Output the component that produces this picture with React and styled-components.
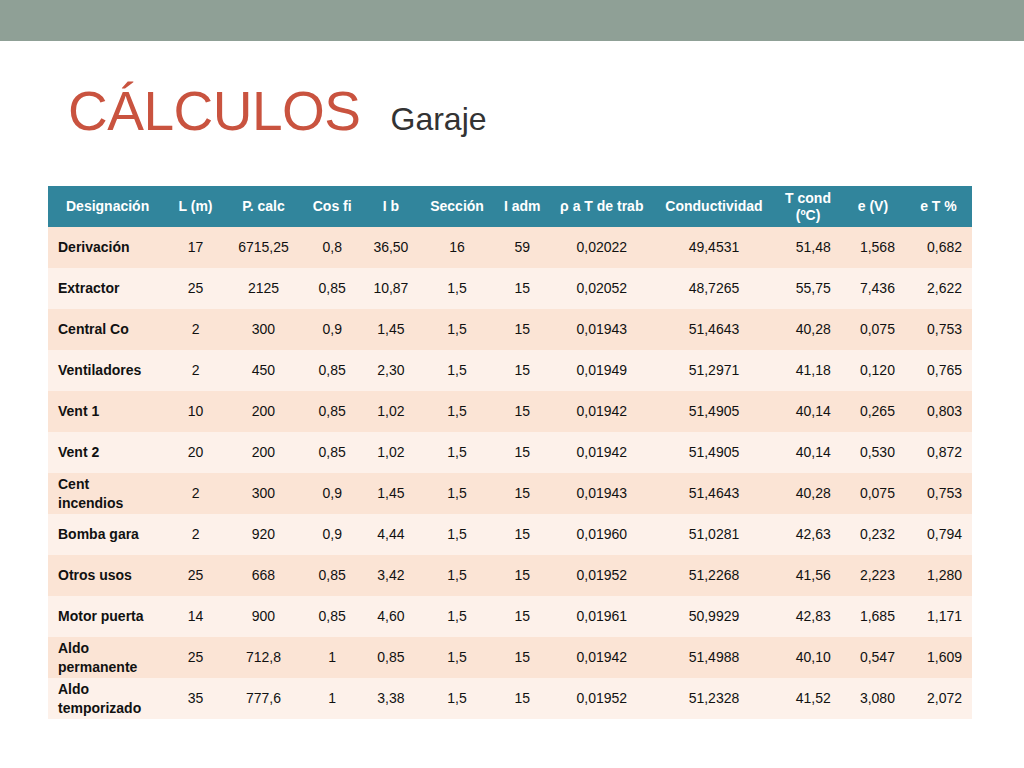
import React from "react";
import styled, { createGlobalStyle } from "styled-components";

const GlobalStyle = createGlobalStyle`
  body { margin: 0; background: #ffffff; font-family: "Liberation Sans", Arial, sans-serif; }
`;

const TopBar = styled.div`
  height: 41px;
  background: #8fa096;
`;

const Slide = styled.div`
  width: 1024px;
  height: 768px;
  background: #fff;
  overflow: hidden;
`;

const TitleRow = styled.div`
  display: flex;
  align-items: baseline;
  gap: 30px;
  padding: 38px 0 0 68px;
  height: 107px;
  box-sizing: border-box;
`;

const Title = styled.h1`
  margin: 0;
  font-weight: 400;
  font-size: 55px;
  color: #c9533f;
  letter-spacing: -0.5px;
`;

const Subtitle = styled.span`
  font-size: 32px;
  color: #333;
`;

const Table = styled.table`
  margin: 38px 0 0 48px;
  width: 924px;
  border-collapse: collapse;
  font-size: 14px;
  color: #111;
`;

const Th = styled.th`
  background: #31859c;
  color: #fff;
  font-weight: 700;
  height: 41px;
  padding: 0 4px;
  line-height: 17px;
  width: ${p => p.$w}px;
  text-align: center;
`;

const Tr = styled.tr`
  background: ${p => (p.$odd ? "#fbe4d5" : "#fdf1ea")};
  height: 41px;
`;

const Td = styled.td`
  padding: 0 ${p => (p.$right ? "10px" : "4px")};
  text-align: ${p => (p.$right ? "right" : "center")};
  line-height: 17px;
`;

const NameTd = styled.td`
  padding: 0 10px;
  font-weight: 700;
  line-height: 19px;
`;

const cols = [
  ["Designación", 118], ["L (m)", 60], ["P. calc", 80], ["Cos fi", 60], ["I b", 58],
  ["Sección", 70], ["I adm", 58], ["ρ  a T de trab", 112], ["Conductividad", 122],
  ["T cond (ºC)", 62], ["e (V)", 60], ["e T %", 64],
];

const rows = [
  ["Derivación", "17", "6715,25", "0,8", "36,50", "16", "59", "0,02022", "49,4531", "51,48", "1,568", "0,682"],
  ["Extractor", "25", "2125", "0,85", "10,87", "1,5", "15", "0,02052", "48,7265", "55,75", "7,436", "2,622"],
  ["Central Co", "2", "300", "0,9", "1,45", "1,5", "15", "0,01943", "51,4643", "40,28", "0,075", "0,753"],
  ["Ventiladores", "2", "450", "0,85", "2,30", "1,5", "15", "0,01949", "51,2971", "41,18", "0,120", "0,765"],
  ["Vent 1", "10", "200", "0,85", "1,02", "1,5", "15", "0,01942", "51,4905", "40,14", "0,265", "0,803"],
  ["Vent 2", "20", "200", "0,85", "1,02", "1,5", "15", "0,01942", "51,4905", "40,14", "0,530", "0,872"],
  ["Cent incendios", "2", "300", "0,9", "1,45", "1,5", "15", "0,01943", "51,4643", "40,28", "0,075", "0,753"],
  ["Bomba gara", "2", "920", "0,9", "4,44", "1,5", "15", "0,01960", "51,0281", "42,63", "0,232", "0,794"],
  ["Otros usos", "25", "668", "0,85", "3,42", "1,5", "15", "0,01952", "51,2268", "41,56", "2,223", "1,280"],
  ["Motor puerta", "14", "900", "0,85", "4,60", "1,5", "15", "0,01961", "50,9929", "42,83", "1,685", "1,171"],
  ["Aldo permanente", "25", "712,8", "1", "0,85", "1,5", "15", "0,01942", "51,4988", "40,10", "0,547", "1,609"],
  ["Aldo temporizado", "35", "777,6", "1", "3,38", "1,5", "15", "0,01952", "51,2328", "41,52", "3,080", "2,072"],
];

export default function App() {
  return (
    <Slide>
      <GlobalStyle />
      <TopBar />
      <TitleRow>
        <Title>CÁLCULOS</Title>
        <Subtitle>Garaje</Subtitle>
      </TitleRow>
      <Table>
        <thead>
          <tr>
            {cols.map(([c, w]) => <Th key={c} $w={w}>{c}</Th>)}
          </tr>
        </thead>
        <tbody>
          {rows.map((r, i) => (
            <Tr key={i} $odd={i % 2 === 0}>
              <NameTd>{r[0]}</NameTd>
              {r.slice(1).map((v, j) => (
                <Td key={j} $right={j >= 8}>{v}</Td>
              ))}
            </Tr>
          ))}
        </tbody>
      </Table>
    </Slide>
  );
}
